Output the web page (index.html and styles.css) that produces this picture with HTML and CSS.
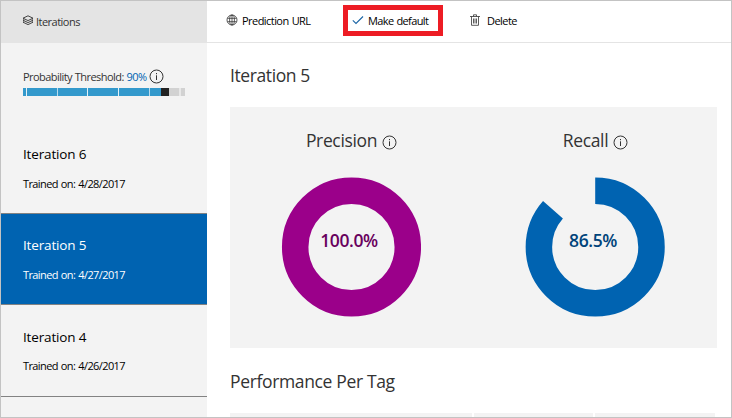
FILE: index.html
```html
<!DOCTYPE html>
<html lang="en">
<head>
<meta charset="utf-8">
<title>Iterations</title>
<link rel="stylesheet" href="styles.css">
</head>
<body>
<div class="app">
  <aside class="sidebar">
    <header class="side-head">
      <svg class="layers" width="12" height="12" viewBox="0 0 12 12"><path d="M6 .8 11 3.200 6 5.600 1 3.200ZM2.200 4.500 1 5.200 6 7.600 11 5.200 9.800 4.500M2.200 6.500 1 7.200 6 9.600 11 7.200 9.800 6.500"/></svg>
      <span class="t-side">Iterations</span>
    </header>
    <section class="threshold">
      <div class="threshold-label"><span class="t-prob">Probability Threshold: <b>90%</b></span>
        <svg class="info" width="15" height="15" viewBox="0 0 15 15"><circle cx="7.500" cy="7.500" r="6.500"/><path d="M7.500 6.300V11M7.500 4V5.200"/></svg>
      </div>
      <div class="slider"><i class="fill"></i><i class="thumb"></i>
        <div class="ticks"><i></i><i class="soft"></i><i></i><i></i><i class="soft"></i><i class="soft"></i></div>
      </div>
    </section>
    <ul class="list">
      <li class="item"><span class="name">Iteration 6</span><span class="date">Trained on: 4/28/2017</span></li>
      <li class="item selected"><span class="name">Iteration 5</span><span class="date">Trained on: 4/27/2017</span></li>
      <li class="item"><span class="name">Iteration 4</span><span class="date">Trained on: 4/26/2017</span></li>
    </ul>
  </aside>
  <main class="main">
    <nav class="toolbar">
      <a class="tool url"><svg width="12" height="12" viewBox="0 0 12 12"><circle cx="6" cy="6" r="5"/><ellipse cx="6" cy="6" rx="2.400" ry="5"/><path d="M1.500 4.300H10.500M1.500 7.700H10.500M6 1V11"/></svg><span class="t-url">Prediction URL</span></a>
      <a class="tool default"><svg class="check" width="12" height="12" viewBox="0 0 12 12"><path d="M.8 6.300 4 9.500 11 2.500"/></svg><span class="t-default">Make default</span></a>
      <a class="tool delete"><svg width="10" height="12" viewBox="0 0 10 12"><path d="M0 2.500H10M3.500 2.500V.8H6.500V2.500M1.500 2.500V11.300H8.500V2.500M3.500 4.500V9.500M5 4.500V9.500M6.500 4.500V9.500"/></svg><span class="t-delete">Delete</span></a>
    </nav>
    <div class="content">
      <h1 class="t-title">Iteration 5</h1>
      <section class="panel">
        <div class="metric">
          <h2><span class="t-precision">Precision</span><svg class="info" width="15" height="15" viewBox="0 0 15 15"><circle cx="7.500" cy="7.500" r="6.500"/><path d="M7.500 6.300V11M7.500 4V5.200"/></svg></h2>
          <div class="chart"><svg width="140" height="140" viewBox="-70.500 -70 140 140"><circle class="ring purple" r="56.300"/></svg><span class="value v-precision">100.0%</span></div>
        </div>
        <div class="metric recall">
          <h2><span class="t-recall">Recall</span><svg class="info" width="15" height="15" viewBox="0 0 15 15"><circle cx="7.500" cy="7.500" r="6.500"/><path d="M7.500 6.300V11M7.500 4V5.200"/></svg></h2>
          <div class="chart"><svg width="140" height="140" viewBox="-70.200 -70 140 140"><circle class="ring blue" r="56.300" pathLength="100" stroke-dasharray="86.500 13.500" transform="rotate(-90)"/></svg><span class="value v-recall">86.5%</span></div>
        </div>
      </section>
      <h1 class="t-perf">Performance Per Tag</h1>
      <div class="tags"><i></i><i></i><i></i></div>
    </div>
  </main>
</div>
</body>
</html>
```
FILE: styles.css
```css
* { box-sizing: border-box; }
body { margin: 0; font-family: "Open Sans", "Noto Sans", sans-serif; color: #333; }
svg { display: block; flex: none; fill: none; stroke: #333; stroke-width: 1; }
span, h1 { white-space: nowrap; }
.app { display: flex; width: 732px; height: 418px; border: 1px solid #c3c3c3; background: #fff; overflow: hidden; }

.sidebar { width: 206px; background: #f3f3f3; }
.side-head { display: flex; align-items: center; gap: 2px; height: 42px; padding: 0 0 2px 21px; background: #e4e4e4; font-size: 11px; letter-spacing: -.52px; }
.side-head svg { margin-top: -1px; }
.layers { stroke-width: .9; }
.threshold { height: 79px; padding: 26px 0 0 22px; }
.threshold-label { display: flex; align-items: center; gap: 2px; height: 16px; font-size: 11px; letter-spacing: -.55px; word-spacing: .5px; }
.threshold-label span { margin-top: -1px; }
.threshold-label svg { margin-top: -2px; }
.threshold-label b { font-weight: 400; color: #0063b1; }
.slider { display: flex; position: relative; width: 162px; height: 8px; margin-top: 3px; background: #d2d2d2; }
.fill { width: 138px; background: #3399cc; }
.thumb { width: 8px; background: #222; }
.ticks { position: absolute; inset: 0; display: flex; gap: 29.700px; padding-left: 3px; }
.ticks i { width: 1px; background: #e4f2f9; }
.ticks .soft { background: #b9dcee; }
.ticks i:last-child { width: 2px; background: #e8e8e8; }
.list { margin: 0; padding: 0; list-style: none; color: #000; }
.item { display: flex; flex-direction: column; height: 92px; padding: 21px 0 0 22px; border-bottom: 1px solid #828282; }
.item.selected { height: 91px; padding-top: 20px; background: #0063b1; color: #fff; }
.name { height: 22px; line-height: 22px; font-size: 13.500px; letter-spacing: -.15px; }
.date { height: 16px; margin-top: 11px; line-height: 16px; font-size: 11px; letter-spacing: -.6px; word-spacing: .7px; }
.item:last-child .date { margin-top: 10px; }

.main { flex: 1; min-width: 0; }
.toolbar { display: flex; height: 42px; padding: 4px 0 0 18px; border-bottom: 1px solid #e4e4e4; color: #000; font-size: 11px; letter-spacing: -.55px; word-spacing: .7px; }
.tool { display: flex; align-items: center; height: 31px; }
.tool span { margin-top: -1px; }
.tool svg { margin-top: -2px; stroke-width: .8; }
.url { width: 118px; gap: 4px; padding-left: 1px; }
.default { width: 100px; gap: 4px; padding-left: 4px; border: 5px solid #ed1c24; }
.default span { letter-spacing: -.62px; }
.delete { gap: 7px; padding-left: 27px; }
.tool .check { stroke: #1b65a5; stroke-width: 1.100; }
.content { padding-left: 23px; }
h1, h2 { margin: 0; font-weight: 400; }
h1 { height: 30px; line-height: 30px; font-size: 17.500px; letter-spacing: -.4px; }
.t-title { margin-top: 17px; }
.panel { display: flex; width: 487px; height: 241px; margin-top: 17px; padding-left: 51px; background: #f3f3f3; }
.metric { width: 140px; padding-top: 19px; }
.recall { margin-left: 104px; }
h2 { display: flex; align-items: center; justify-content: center; gap: 5px; height: 28px; padding-left: 1px; font-size: 17.500px; letter-spacing: -.35px; }
h2 svg { margin-top: 5px; }
.chart { position: relative; margin-top: 23px; }
.ring { stroke-width: 26.500; }
.purple { stroke: #9b008a; }
.blue { stroke: #0063b1; }
.value { position: absolute; top: 51px; left: 0; width: 136px; line-height: 24px; text-align: center; font-size: 17.500px; font-weight: 600; letter-spacing: -.4px; }
.v-precision { color: #68005d; }
.v-recall { color: #00437a; }
.t-perf { margin-top: 18px; letter-spacing: -.35px; }
.tags { display: grid; grid-template-columns: 242px 119px 120px; gap: 2px; height: 4px; margin-top: 17px; }
.tags i { background: #f3f3f3; }
```
